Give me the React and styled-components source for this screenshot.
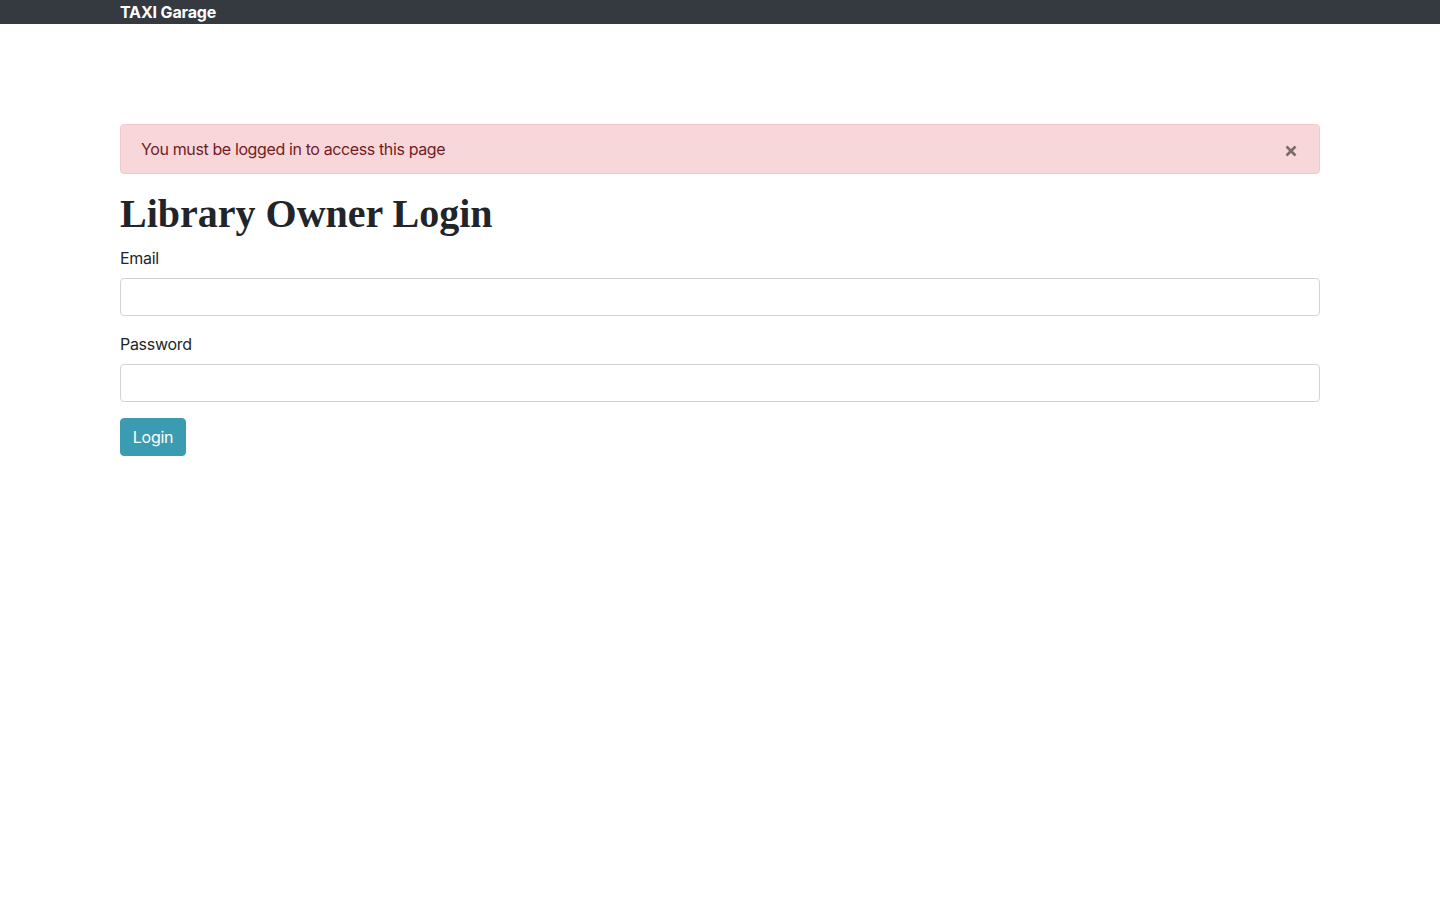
import React from "react";
import styled, { createGlobalStyle } from "styled-components";

const GlobalStyle = createGlobalStyle`
  *, *::before, *::after {
    box-sizing: border-box;
  }

  body {
    margin: 0;
    font-family: Inter, "Noto Sans", "Liberation Sans", sans-serif;
    font-size: 16px;
    line-height: 1.5;
    color: #212529;
    background: #fff;
  }
`;

const Navbar = styled.nav`
  background-color: #343a40;
  height: 24px;
`;

const Container = styled.div`
  width: 1200px;
  margin: 0 auto;
`;

const Brand = styled.a`
  display: inline-block;
  color: #fff;
  font-weight: 700;
  font-size: 16px;
  line-height: 24px;
  letter-spacing: -0.15px;
  text-decoration: none;
`;

const Main = styled(Container)`
  padding-top: 100px;
`;

const Alert = styled.div`
  position: relative;
  display: flex;
  align-items: center;
  justify-content: space-between;
  height: 50px;
  padding: 0 20px;
  margin-bottom: 16px;
  background-color: #f8d7da;
  border: 1px solid #f5c6cb;
  border-radius: 4px;
  color: #721c24;
  letter-spacing: -0.38px;
`;

const CloseButton = styled.button`
  border: 0;
  background: transparent;
  padding: 0;
  margin-right: 2px;
  margin-top: 3px;
  color: #000;
  opacity: 0.5;
  cursor: pointer;
  display: flex;
`;

const Title = styled.h1`
  margin: 0 0 8px;
  font-family: "Liberation Serif", "Times New Roman", serif;
  font-weight: 700;
  font-size: 40px;
  line-height: 48px;
  color: #212529;
`;

const FormGroup = styled.div`
  margin-bottom: 16px;
`;

const Label = styled.label`
  display: block;
  margin-bottom: 8px;
  line-height: 24px;
  letter-spacing: -0.3px;
`;

const Input = styled.input`
  display: block;
  width: 100%;
  height: 38px;
  padding: 6px 12px;
  font: inherit;
  color: #495057;
  background: #fff;
  border: 1px solid #ced4da;
  border-radius: 4px;
  outline: none;
`;

const Button = styled.button`
  display: inline-block;
  width: 66px;
  height: 38px;
  padding: 0;
  font: inherit;
  letter-spacing: -0.3px;
  color: #fff;
  background-color: #3b9cb1;
  border: 1px solid #3b9cb1;
  border-radius: 4px;
  cursor: pointer;
`;

function CloseIcon() {
  return (
    <svg width="12" height="12" viewBox="0 0 12 12">
      <path d="M1.5 1.5 L10.5 10.5 M10.5 1.5 L1.5 10.5" stroke="currentColor" strokeWidth="2.6" />
    </svg>
  );
}

export default function App() {
  return (
    <>
      <GlobalStyle />
      <Navbar>
        <Container>
          <Brand href="#">TAXI Garage</Brand>
        </Container>
      </Navbar>
      <Main>
        <Alert role="alert">
          <span>You must be logged in to access this page</span>
          <CloseButton aria-label="Close">
            <CloseIcon />
          </CloseButton>
        </Alert>
        <Title>Library Owner Login</Title>
        <form onSubmit={(e) => e.preventDefault()}>
          <FormGroup>
            <Label htmlFor="email">Email</Label>
            <Input id="email" type="email" />
          </FormGroup>
          <FormGroup>
            <Label htmlFor="password">Password</Label>
            <Input id="password" type="password" />
          </FormGroup>
          <Button type="submit">Login</Button>
        </form>
      </Main>
    </>
  );
}
